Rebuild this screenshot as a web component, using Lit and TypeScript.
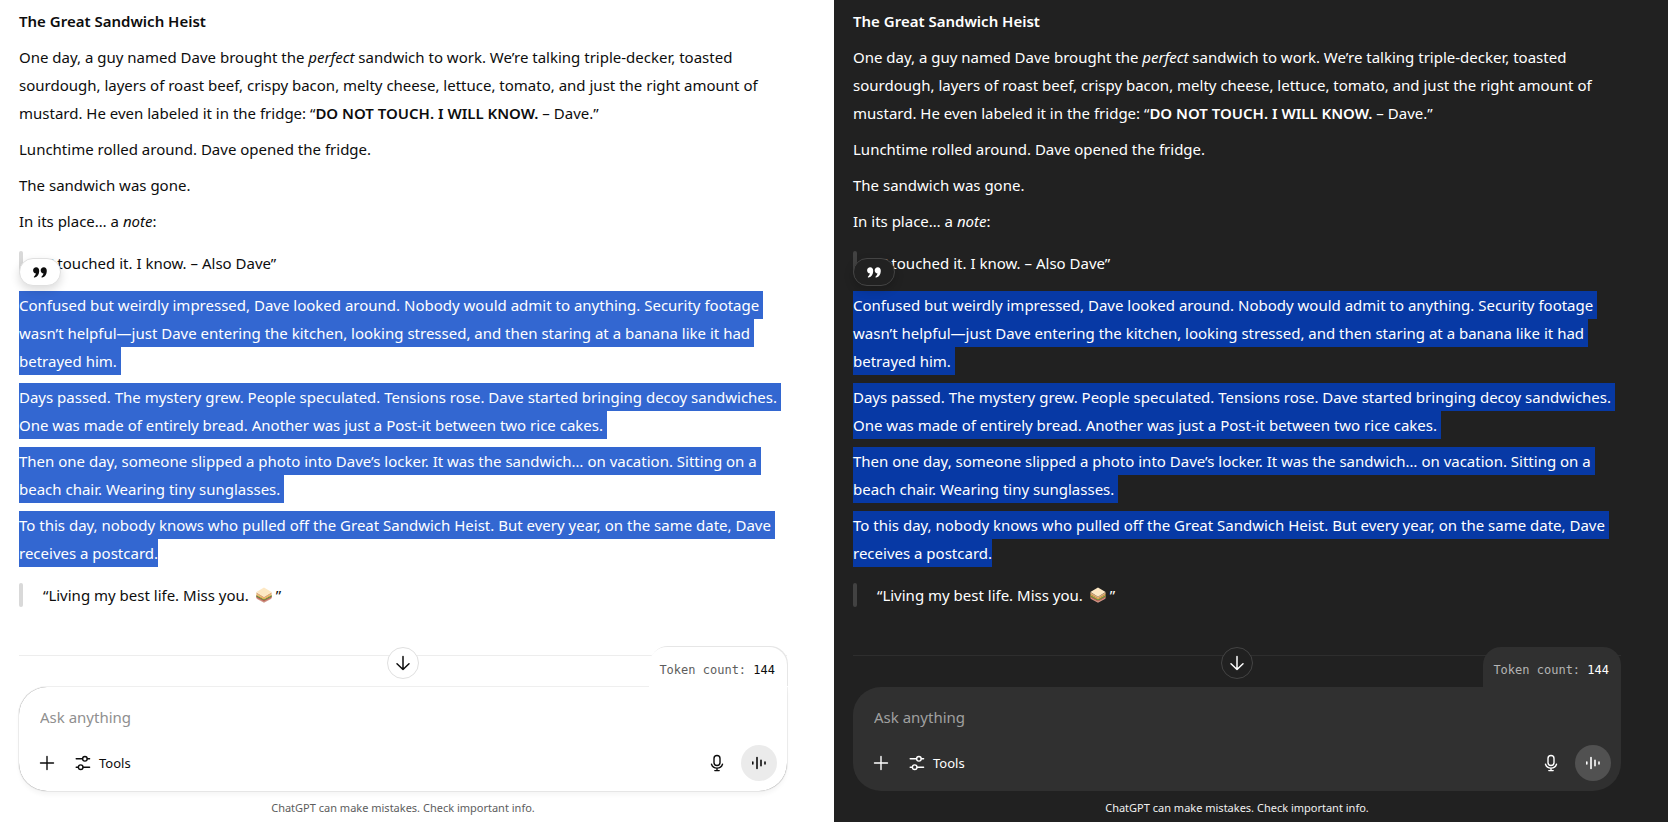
import { LitElement, html, css, svg } from "lit";
import { customElement, property } from "lit/decorators.js";

const sandwich = svg`
  <path d="M.6 10 L8 14 L15.400 10 V11.800 L8 15.800 L.6 11.800Z" fill="#cf9a8a"/>
  <path d="M.2 8.800 L8 12.800 L15.800 8.800 V10.400 L8 14.600 L.2 10.400Z" fill="#c9605a"/>
  <path d="M.2 8 L8 12 L15.800 8 V9.600 L8 13.600 L.2 9.600Z" fill="#5f9145"/>
  <path d="M.4 7.200 L8 11.200 L15.600 7.200 V8.300 L8 12.500 L.4 8.300Z" fill="#f0ab45"/>
  <path d="M.4 5.200 L8 9.800 L15.600 5.200 V7.300 L8 11.600 L.4 7.300Z" fill="#dfae78"/>
  <path d="M8 .4 L15.600 5 L8 9.800 L.4 5Z" fill="#fde8c4"/>`;

@customElement("chat-panel")
class ChatPanel extends LitElement {
  @property({ reflect: true }) theme = "light";

  static styles = css`
    :host {
      --bg: #ffffff;
      --text: #0d0d0d;
      --muted: #5d5d5d;
      --placeholder: #8f8f8f;
      --surface: #ffffff;
      --line: #ededed;
      --ring: #e0e0e0;
      --quote: #d9d9d9;
      --select: #3367d1;
      --voice: #ebebeb;
      --composer-shadow: 0 4px 4px rgba(0, 0, 0, 0.04), 0 0 1px rgba(0, 0, 0, 0.62);
      --tab-shadow: 1px -1px 0 #e6e6e6;
      --pill-shadow: 0 4px 10px rgba(0, 0, 0, 0.14);
      --footnote: #5d5d5d;
      display: block;
      box-sizing: border-box;
      min-height: 100vh;
      padding: 7px 47px 0 19px;
      background: var(--bg);
      color: var(--text);
      font-family: "Segoe UI", "Noto Sans", "Open Sans", sans-serif;
      font-size: 15px;
      line-height: 28px;
    }
    :host([theme="dark"]) {
      --bg: #212121;
      --text: #ffffff;
      --muted: #b4b4b4;
      --placeholder: #a0a0a0;
      --surface: #303030;
      --line: #2e2e2e;
      --ring: #444444;
      --quote: #424242;
      --select: #0739a5;
      --voice: #515151;
      --composer-shadow: none;
      --tab-shadow: none;
      --pill-shadow: 0 4px 10px rgba(0, 0, 0, 0.18);
      --footnote: #f0f0f0;
    }
    .story {
      display: flex;
      flex-direction: column;
      gap: 8px;
    }
    .story p, .story h1, .story blockquote { margin: 0; }
    .title { font-size: 15px; font-weight: 600; }
    .strong { font-weight: 600; }
    .story .quote {
      position: relative;
      margin: 8px 0;
      padding-left: 24px;
      line-height: 24px;
    }
    .quote::before {
      content: "";
      position: absolute;
      inset: 0 auto 0 0;
      width: 4px;
      border-radius: 2px;
      background: var(--quote);
    }
    .selected {
      padding: 4px 4px 4px 0;
      background: var(--select);
      color: #fff;
      -webkit-box-decoration-break: clone;
      box-decoration-break: clone;
    }
    .selected.last { padding-right: 0; }
    .emoji {
      width: 16px;
      height: 16px;
      margin: 0 4px 0 3px;
      vertical-align: -2px;
    }
    button {
      display: inline-flex;
      align-items: center;
      justify-content: center;
      margin: 0;
      padding: 0;
      border: 0;
      background: none;
      color: inherit;
      font: inherit;
    }
    .reply {
      position: absolute;
      z-index: 1;
      top: 7px;
      left: 0;
      width: 42px;
      height: 28px;
      border: 1px solid var(--ring);
      border-radius: 14px;
      background: var(--bg);
      box-shadow: var(--pill-shadow);
    }
    .divider {
      height: 1px;
      margin: 40px 0 31px;
      border: 0;
      background: var(--line);
    }
    .composer {
      position: relative;
      display: flex;
      flex-direction: column;
      gap: 14px;
      padding: 16px 10px 10px;
      border-radius: 28px 0 28px 28px;
      background: var(--surface);
      box-shadow: var(--composer-shadow);
    }
    .prompt {
      box-sizing: border-box;
      width: 100%;
      height: 28px;
      padding: 0 11px;
      border: 0;
      outline: 0;
      background: none;
      color: inherit;
      font: inherit;
    }
    .prompt::placeholder { color: var(--placeholder); opacity: 1; }
    .actions { display: flex; align-items: center; height: 36px; }
    .add, .mic { width: 36px; height: 36px; }
    .tools { height: 36px; gap: 8px; padding: 0 10px; font-size: 13px; line-height: 20px; }
    .mic { margin: 0 6px 0 auto; }
    .voice {
      width: 36px;
      height: 36px;
      border-radius: 50%;
      background: var(--voice);
    }
    .down {
      position: absolute;
      top: -40px;
      left: calc(50% - 16px);
      width: 32px;
      height: 32px;
      border: 1px solid var(--ring);
      border-radius: 50%;
      background: var(--bg);
    }
    .tokens {
      position: absolute;
      right: 0;
      bottom: 100%;
      box-sizing: border-box;
      height: 40px;
      padding: 6px 12px 0 10px;
      border-radius: 18px 18px 0 0;
      background: var(--surface);
      box-shadow: var(--tab-shadow);
      color: var(--muted);
      font: 12px/34px "DejaVu Sans Mono", monospace;
      white-space: pre;
    }
    .tokens::after {
      content: "";
      position: absolute;
      inset: 100% 0 auto 0;
      height: 2px;
      background: var(--surface);
    }
    .tokens b { color: var(--text); font-weight: 400; }
    .footnote {
      margin: 0;
      padding-top: 7px;
      color: var(--footnote);
      font-size: 11px;
      line-height: 20px;
      text-align: center;
    }
  `;

  render() {
    return html`
      <article class="story">
        <h1 class="title">The Great Sandwich Heist</h1>
        <p>One day, a guy named Dave brought the <em>perfect</em> sandwich to work. We’re talking triple-decker, toasted sourdough, layers of roast beef, crispy bacon, melty cheese, lettuce, tomato, and just the right amount of mustard. He even labeled it in the fridge: “<strong class="strong">DO NOT TOUCH. I WILL KNOW.</strong> – Dave.”</p>
        <p>Lunchtime rolled around. Dave opened the fridge.</p>
        <p>The sandwich was gone.</p>
        <p>In its place… a <em>note</em>:</p>
        <blockquote class="quote">“I touched it. I know. – Also Dave”
          <button class="reply" aria-label="Reply to selection">
            <svg width="14" height="11" viewBox="0 0 14 11" fill="currentColor">
              <path d="M3.200.3C5 .3 6.200 1.700 6.200 3.900 6.200 7 4.500 9.600 1.700 10.500 1 10.700.5 9.900 1.100 9.400 2.100 8.600 2.700 7.700 2.800 6.300 1.200 6.200.1 5 .1 3.400.1 1.600 1.400.3 3.200.3Z"/>
              <path d="M10.800.3c1.800 0 3 1.400 3 3.600 0 3.100-1.700 5.700-4.500 6.600-.7.2-1.200-.6-.6-1.100 1-.8 1.600-1.700 1.700-3.100C8.800 6.200 7.700 5 7.700 3.400 7.700 1.600 9 .3 10.800.3Z"/>
            </svg>
          </button>
        </blockquote>
        <p><span class="selected">Confused but weirdly impressed, Dave looked around. Nobody would admit to anything. Security footage wasn’t helpful—just Dave entering the kitchen, looking stressed, and then staring at a banana like it had betrayed him.</span></p>
        <p><span class="selected">Days passed. The mystery grew. People speculated. Tensions rose. Dave started bringing decoy sandwiches. One was made of entirely bread. Another was just a Post-it between two rice cakes.</span></p>
        <p><span class="selected">Then one day, someone slipped a photo into Dave’s locker. It was the sandwich… on vacation. Sitting on a beach chair. Wearing tiny sunglasses.</span></p>
        <p><span class="selected">To this day, nobody knows who pulled off the Great Sandwich Heist. But every year, on the same date, Dave</span> <span class="selected last">receives a postcard.</span></p>
        <blockquote class="quote">“Living my best life. Miss you. <svg class="emoji" viewBox="0 0 16 16" role="img" aria-label="sandwich">${sandwich}</svg>”</blockquote>
      </article>
      <hr class="divider" />
      <form class="composer">
        <input class="prompt" type="text" aria-label="Ask anything" placeholder="Ask anything" />
        <div class="actions">
          <button class="add" type="button" aria-label="Add">
            <svg width="16" height="16" viewBox="0 0 16 16" fill="none" stroke="currentColor" stroke-width="1.400" stroke-linecap="round"><path d="M8 1.500v13M1.500 8h13"/></svg>
          </button>
          <button class="tools" type="button">
            <svg width="16" height="16" viewBox="0 0 16 16" fill="none" stroke="currentColor" stroke-width="1.400" stroke-linecap="round">
              <path d="M1.200 3.800h6.300M12.300 3.800h2.300M1.200 12.200h2.100M8.100 12.200h6.500"/>
              <circle cx="9.900" cy="3.800" r="2.300"/><circle cx="5.700" cy="12.200" r="2.300"/>
            </svg>
            Tools
          </button>
          <button class="mic" type="button" aria-label="Dictate">
            <svg width="14" height="18" viewBox="0 0 14 18" fill="none" stroke="currentColor" stroke-width="1.400" stroke-linecap="round">
              <rect x="4" y="1.500" width="6" height="10" rx="3"/>
              <path d="M1.500 10.200c.8 2.400 2.900 3.900 5.500 3.900s4.700-1.500 5.500-3.900M7 14.200v2.400M4.800 16.600h4.400"/>
            </svg>
          </button>
          <button class="voice" type="button" aria-label="Voice mode">
            <svg width="16" height="14" viewBox="0 0 16 14" fill="none" stroke="currentColor" stroke-width="1.600" stroke-linecap="round"><path d="M1.800 6v2M6 1.600v10.800M10 4.200v5.600M14 6v2"/></svg>
          </button>
        </div>
        <button class="down" type="button" aria-label="Scroll to bottom">
          <svg width="16" height="16" viewBox="0 0 16 16" fill="none" stroke="currentColor" stroke-width="1.500" stroke-linecap="round" stroke-linejoin="round"><path d="M8 1.500v13M2 8.800l6 5.700 6-5.700"/></svg>
        </button>
        <div class="tokens">Token count: <b>144</b></div>
      </form>
      <p class="footnote">ChatGPT can make mistakes. Check important info.</p>
    `;
  }
}

@customElement("app-root")
class AppRoot extends LitElement {
  static styles = css`
    :host {
      display: grid;
      grid-template-columns: 1fr 1fr;
    }
  `;

  render() {
    return html`
      <chat-panel theme="light"></chat-panel>
      <chat-panel theme="dark"></chat-panel>
    `;
  }
}
